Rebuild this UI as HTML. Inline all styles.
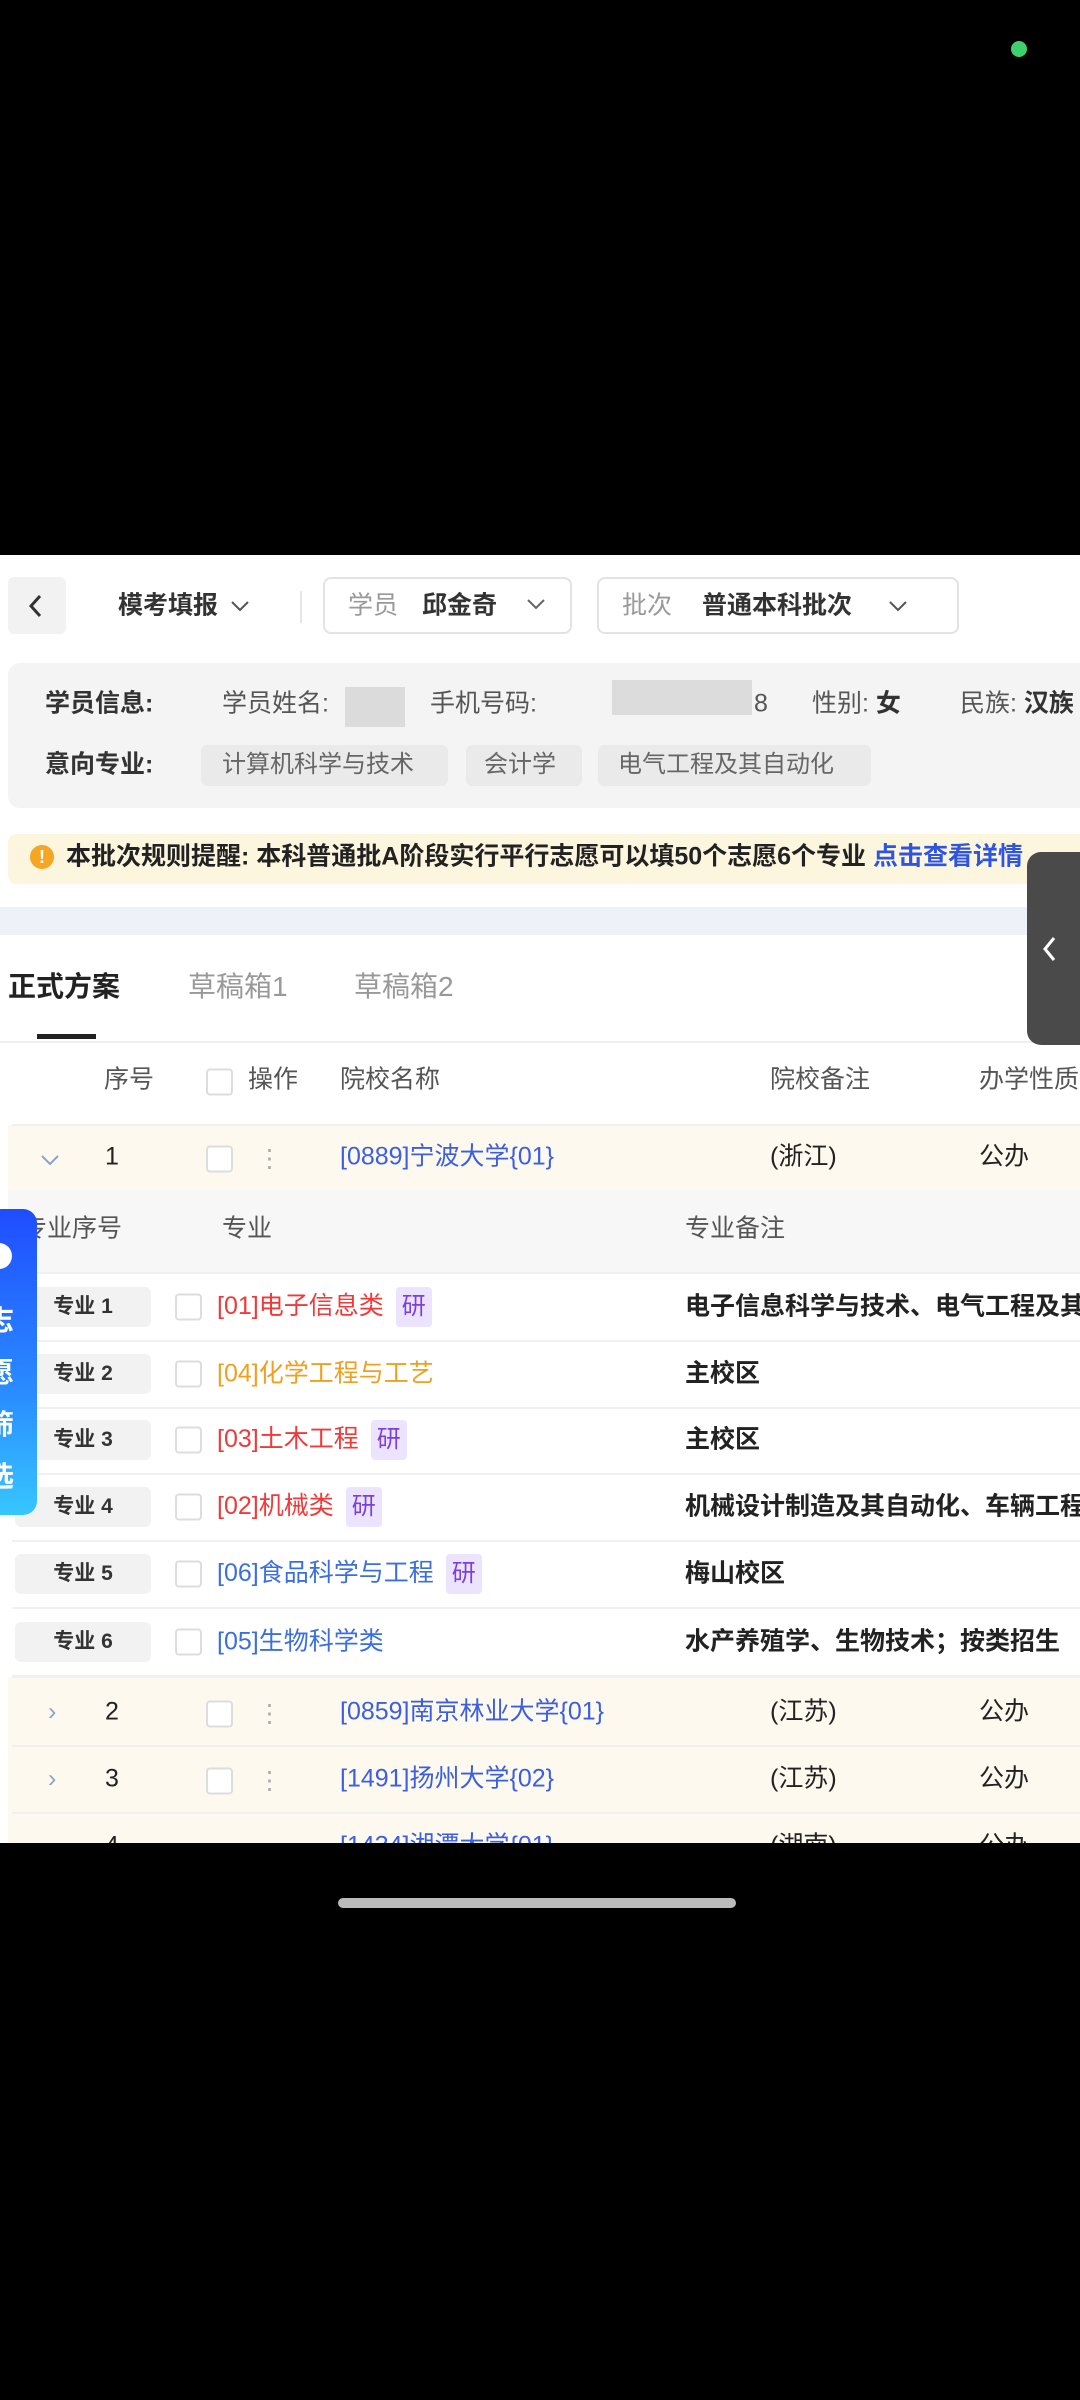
<!DOCTYPE html>
<html><head><meta charset="utf-8"><style>
*{margin:0;padding:0;box-sizing:border-box}
body{width:1080px;height:2400px;background:#000;position:relative;overflow:hidden;font-family:"Liberation Sans","Noto Sans CJK SC",sans-serif;color:#222}
.a{position:absolute;white-space:nowrap}
.w{position:absolute;left:0;top:555px;width:1080px;height:1288px;background:#fff;overflow:hidden}
.t{position:absolute;white-space:nowrap;font-size:25px;line-height:1;transform:translateY(-50%)}
.cb{position:absolute;width:27px;height:27px;border:2px solid #ddd;border-radius:4px;background:#fff;transform:translateY(-50%)}
.pill{position:absolute;left:15px;width:136px;height:40px;background:#f2f2f2;border-radius:6px;transform:translateY(-50%);font-size:21px;font-weight:bold;text-align:center;line-height:40px;color:#333}
.yan{display:inline-block;background:#ece4ff;color:#7a3fe0;padding:0 6px;border-radius:4px;line-height:40px;margin-left:12px;font-size:24px}
.hl{position:absolute;left:12px;right:0;height:2px;background:#eef0f4}
</style></head><body>
<div class="a" style="left:1011px;top:41px;width:16px;height:16px;border-radius:50%;background:#3dd06c"></div>
<div class="w">
 <div class="a" style="left:8px;top:22px;width:58px;height:57px;background:#f2f2f2;border-radius:6px"></div>
 <svg class="a" style="left:26px;top:38px" width="20" height="26"><path d="M14 3 L5 13 L14 23" stroke="#333" stroke-width="3" fill="none"/></svg>
 <div class="t" style="left:118px;top:51px;font-weight:bold;color:#333">模考填报</div>
 <svg class="a" style="left:230px;top:44px" width="20" height="14"><path d="M2 3 L10 11 L18 3" stroke="#555" stroke-width="2" fill="none"/></svg>
 <div class="a" style="left:300px;top:36px;width:2px;height:32px;background:#e5e5e5"></div>
 <div class="a" style="left:323px;top:22px;width:249px;height:57px;border:2px solid #e3e3e3;border-radius:8px"></div>
 <div class="t" style="left:348px;top:51px;color:#999">学员</div>
 <div class="t" style="left:422px;top:51px;font-weight:bold;color:#333">邱金奇</div>
 <svg class="a" style="left:526px;top:42px" width="20" height="14"><path d="M2 3 L10 11 L18 3" stroke="#666" stroke-width="2" fill="none"/></svg>
 <div class="a" style="left:597px;top:22px;width:362px;height:57px;border:2px solid #e3e3e3;border-radius:8px"></div>
 <div class="t" style="left:622px;top:51px;color:#999">批次</div>
 <div class="t" style="left:702px;top:51px;font-weight:bold;color:#333">普通本科批次</div>
 <svg class="a" style="left:888px;top:44px" width="20" height="14"><path d="M2 3 L10 11 L18 3" stroke="#555" stroke-width="2" fill="none"/></svg>

 <div class="a" style="left:8px;top:108px;width:1090px;height:145px;background:#f4f4f4;border-radius:12px"></div>
 <div class="t" style="left:45px;top:149px;font-weight:bold;color:#333">学员信息:</div>
 <div class="t" style="left:222px;top:149px;color:#555">学员姓名:</div>
 <div class="a" style="left:345px;top:132px;width:60px;height:40px;background:#d4d4d4;opacity:.8"></div>
 <div class="t" style="left:430px;top:149px;color:#555">手机号码:</div>
 <div class="a" style="left:612px;top:125px;width:140px;height:35px;background:#d6d6d6;opacity:.8"></div>
 <div class="t" style="left:754px;top:149px;color:#555">8</div>
 <div class="t" style="left:812px;top:149px;color:#555">性别: <b style="color:#333">女</b></div>
 <div class="t" style="left:960px;top:149px;color:#555">民族: <b style="color:#333">汉族</b></div>
 <div class="t" style="left:45px;top:210px;font-weight:bold;color:#333">意向专业:</div>
 <div class="a" style="left:201px;top:190px;width:247px;height:41px;background:#eaeaea;border-radius:6px"></div>
 <div class="t" style="left:222px;top:210px;color:#666;font-size:24px">计算机科学与技术</div>
 <div class="a" style="left:466px;top:190px;width:116px;height:41px;background:#eaeaea;border-radius:6px"></div>
 <div class="t" style="left:484px;top:210px;color:#666;font-size:24px">会计学</div>
 <div class="a" style="left:598px;top:190px;width:273px;height:41px;background:#eaeaea;border-radius:6px"></div>
 <div class="t" style="left:618px;top:210px;color:#666;font-size:24px">电气工程及其自动化</div>

 <div class="a" style="left:8px;top:279px;width:1090px;height:50px;background:#fdf6df;border-radius:8px"></div>
 <div class="a" style="left:30px;top:290px;width:24px;height:24px;border-radius:50%;background:#f5a623;color:#fff;font-size:18px;font-weight:bold;text-align:center;line-height:24px">!</div>
 <div class="t" style="left:66px;top:302px;font-weight:bold;color:#222;font-size:25px">本批次规则提醒: 本科普通批A阶段实行平行志愿可以填50个志愿6个专业 <span style="color:#2f55e0">点击查看详情</span></div>

 <div class="a" style="left:0;top:352px;width:1080px;height:28px;background:#eef2f8"></div>
 <div class="t" style="left:8px;top:432px;font-weight:bold;font-size:28px;color:#222">正式方案</div>
 <div class="t" style="left:188px;top:432px;font-size:28px;color:#999">草稿箱1</div>
 <div class="t" style="left:354px;top:432px;font-size:28px;color:#999">草稿箱2</div>
 <div class="a" style="left:37px;top:479px;width:59px;height:5px;background:#222"></div>
 <div class="a" style="left:0;top:486px;width:1080px;height:2px;background:#eee"></div>

 <div class="t" style="left:104px;top:525px;color:#555">序号</div>
 <div class="cb" style="left:206px;top:527px"></div>
 <div class="t" style="left:248px;top:525px;color:#555">操作</div>
 <div class="t" style="left:340px;top:525px;color:#555">院校名称</div>
 <div class="t" style="left:770px;top:525px;color:#555">院校备注</div>
 <div class="t" style="left:979px;top:525px;color:#555">办学性质</div>

 <div class="a" style="left:8px;top:570px;width:1080px;height:65px;background:#fdf9ee"></div>
 <div class="hl" style="top:569px"></div>
 <svg class="a" style="left:40px;top:598px" width="20" height="14"><path d="M2 3 L10 11 L18 3" stroke="#8aa4c8" stroke-width="2" fill="none"/></svg>
 <div class="t" style="left:105px;top:602px;color:#222">1</div>
 <div class="cb" style="left:206px;top:604px"></div>
 <div class="t" style="left:257px;top:604px;color:#aaa">⋮</div>
 <div class="t" style="left:340px;top:602px;color:#3b5fe0">[0889]宁波大学{01}</div>
 <div class="t" style="left:770px;top:602px;color:#222">(浙江)</div>
 <div class="t" style="left:979px;top:602px;color:#222">公办</div>

 <div class="a" style="left:8px;top:635px;width:1080px;height:83px;background:#f7f7f8"></div>
 <div class="t" style="left:22px;top:674px;color:#555">专业序号</div>
 <div class="t" style="left:222px;top:674px;color:#555">专业</div>
 <div class="t" style="left:685px;top:674px;color:#555">专业备注</div>
 <div class="hl" style="top:717px"></div>

 <div class="pill" style="top:752px">专业 1</div><div class="cb" style="left:175px;top:752px"></div>
 <div class="t" style="left:217px;top:752px;color:#f03a3a">[01]电子信息类<span class="yan">研</span></div>
 <div class="t" style="left:685px;top:752px;font-weight:bold;color:#222">电子信息科学与技术、电气工程及其自动化</div>
 <div class="hl" style="top:785px"></div>
 <div class="pill" style="top:819px">专业 2</div><div class="cb" style="left:175px;top:819px"></div>
 <div class="t" style="left:217px;top:819px;color:#f0a020">[04]化学工程与工艺</div>
 <div class="t" style="left:685px;top:819px;font-weight:bold;color:#222">主校区</div>
 <div class="hl" style="top:852px"></div>
 <div class="pill" style="top:885px">专业 3</div><div class="cb" style="left:175px;top:885px"></div>
 <div class="t" style="left:217px;top:885px;color:#f03a3a">[03]土木工程<span class="yan">研</span></div>
 <div class="t" style="left:685px;top:885px;font-weight:bold;color:#222">主校区</div>
 <div class="hl" style="top:918px"></div>
 <div class="pill" style="top:952px">专业 4</div><div class="cb" style="left:175px;top:952px"></div>
 <div class="t" style="left:217px;top:952px;color:#f03a3a">[02]机械类<span class="yan">研</span></div>
 <div class="t" style="left:685px;top:952px;font-weight:bold;color:#222">机械设计制造及其自动化、车辆工程</div>
 <div class="hl" style="top:985px"></div>
 <div class="pill" style="top:1019px">专业 5</div><div class="cb" style="left:175px;top:1019px"></div>
 <div class="t" style="left:217px;top:1019px;color:#3b6fe0">[06]食品科学与工程<span class="yan">研</span></div>
 <div class="t" style="left:685px;top:1019px;font-weight:bold;color:#222">梅山校区</div>
 <div class="hl" style="top:1052px"></div>
 <div class="pill" style="top:1087px">专业 6</div><div class="cb" style="left:175px;top:1087px"></div>
 <div class="t" style="left:217px;top:1087px;color:#3b6fe0">[05]生物科学类</div>
 <div class="t" style="left:685px;top:1087px;font-weight:bold;color:#222">水产养殖学、生物技术；按类招生</div>

 <div class="a" style="left:8px;top:1122px;width:1080px;height:170px;background:#fdf9ee"></div>
 <div class="hl" style="top:1120px;height:3px"></div>
 <div class="t" style="left:48px;top:1157px;color:#8aa4c8">›</div>
 <div class="t" style="left:105px;top:1157px">2</div>
 <div class="cb" style="left:206px;top:1159px"></div>
 <div class="t" style="left:257px;top:1159px;color:#aaa">⋮</div>
 <div class="t" style="left:340px;top:1157px;color:#3b5fe0">[0859]南京林业大学{01}</div>
 <div class="t" style="left:770px;top:1157px">(江苏)</div>
 <div class="t" style="left:979px;top:1157px">公办</div>
 <div class="hl" style="top:1190px"></div>
 <div class="t" style="left:48px;top:1224px;color:#8aa4c8">›</div>
 <div class="t" style="left:105px;top:1224px">3</div>
 <div class="cb" style="left:206px;top:1226px"></div>
 <div class="t" style="left:257px;top:1226px;color:#aaa">⋮</div>
 <div class="t" style="left:340px;top:1224px;color:#3b5fe0">[1491]扬州大学{02}</div>
 <div class="t" style="left:770px;top:1224px">(江苏)</div>
 <div class="t" style="left:979px;top:1224px">公办</div>
 <div class="hl" style="top:1257px"></div>
 <div class="t" style="left:105px;top:1291px">4</div>
 <div class="t" style="left:340px;top:1291px;color:#3b5fe0">[1434]湘潭大学{01}</div>
 <div class="t" style="left:770px;top:1291px">(湖南)</div>
 <div class="t" style="left:979px;top:1291px">公办</div>

 <div class="a" style="left:1027px;top:297px;width:70px;height:193px;background:#4a4a4a;border-radius:14px"></div>
 <svg class="a" style="left:1040px;top:380px" width="20" height="28"><path d="M14 3 L5 14 L14 25" stroke="#fff" stroke-width="3" fill="none"/></svg>
 <div class="a" style="left:-12px;top:654px;width:49px;height:306px;border-radius:14px;background:linear-gradient(180deg,#1f4dff,#2a8cff 60%,#36c6ff)"></div>
 <div class="a" style="left:-14px;top:688px;width:26px;height:26px;border-radius:50%;background:#fff"></div>
 <div class="a" style="left:-14px;top:740px;width:24px;font-size:28px;color:#fff;font-weight:bold;line-height:52px;white-space:normal">志愿筛选</div>
</div>
<div class="a" style="left:338px;top:1898px;width:398px;height:10px;border-radius:5px;background:#bbb"></div>
</body></html>
